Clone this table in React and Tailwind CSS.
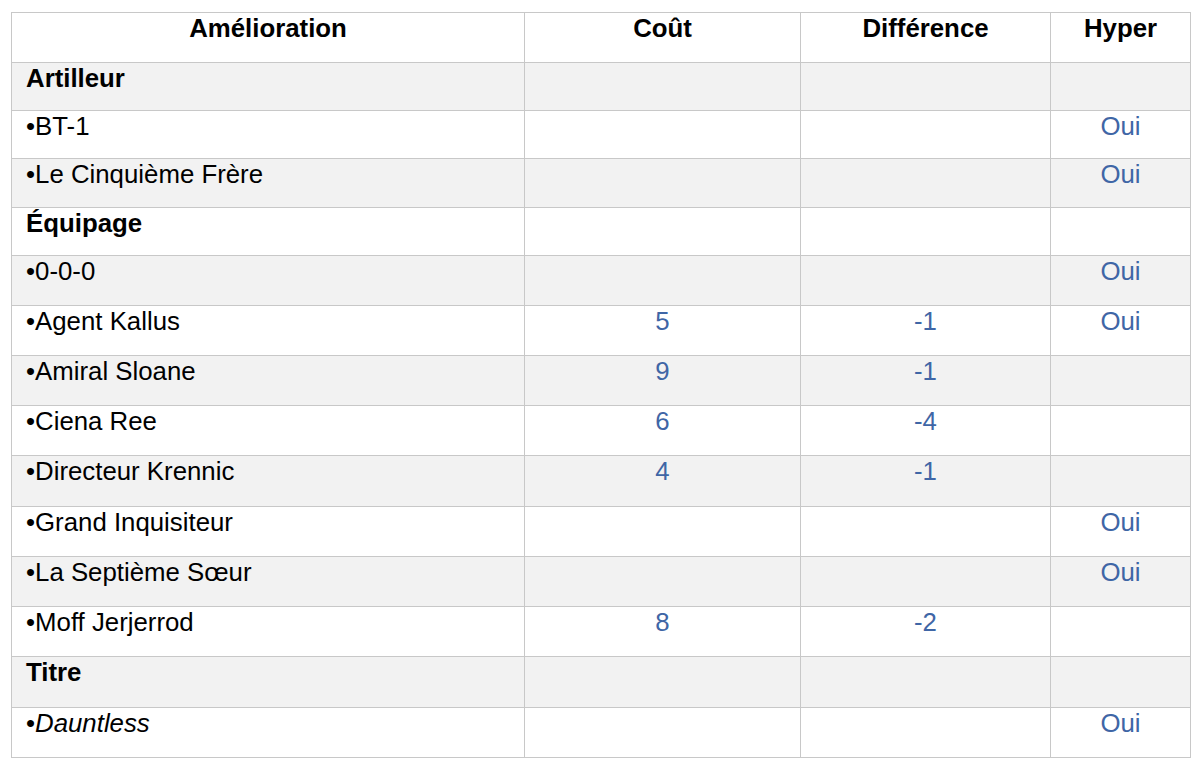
import React from "react";

const rows = [
  { name: "Artilleur", group: true, h: 48 },
  { name: "BT-1", hyper: true, h: 48 },
  { name: "Le Cinquième Frère", hyper: true, h: 49 },
  { name: "Équipage", group: true, h: 48 },
  { name: "0-0-0", hyper: true, h: 50 },
  { name: "Agent Kallus", cost: "5", diff: "-1", hyper: true, h: 50 },
  { name: "Amiral Sloane", cost: "9", diff: "-1", h: 50 },
  { name: "Ciena Ree", cost: "6", diff: "-4", h: 50 },
  { name: "Directeur Krennic", cost: "4", diff: "-1", h: 51 },
  { name: "Grand Inquisiteur", hyper: true, h: 50 },
  { name: "La Septième Sœur", hyper: true, h: 50 },
  { name: "Moff Jerjerrod", cost: "8", diff: "-2", h: 50 },
  { name: "Titre", group: true, h: 51 },
  { name: "Dauntless", italic: true, hyper: true, h: 50 },
];

const cell = "border border-[#c8c8c8] align-top pt-[1px] px-[14px] leading-[1.15]";

export default function App() {
  return (
    <div className="bg-white min-h-screen pt-[12px] pl-[11px] font-['Liberation_Sans',Arial,sans-serif] text-[25.8px] text-black">
      <table className="table-fixed border-collapse w-[1179px]">
        <colgroup>
          <col className="w-[513px]" />
          <col className="w-[276px]" />
          <col className="w-[250px]" />
          <col className="w-[140px]" />
        </colgroup>
        <thead>
          <tr className="h-[50px] bg-white">
            <th className={`${cell} text-center font-bold`}>Amélioration</th>
            <th className={`${cell} text-center font-bold`}>Coût</th>
            <th className={`${cell} text-center font-bold`}>Différence</th>
            <th className={`${cell} text-center font-bold`}>Hyper</th>
          </tr>
        </thead>
        <tbody>
          {rows.map((r, i) => (
            <tr
              key={r.name}
              className={i % 2 === 0 ? "bg-[#f2f2f2]" : "bg-white"}
              style={{ height: r.h }}
            >
              <td className={`${cell} ${r.group ? "font-bold" : ""}`}>
                {r.group ? (
                  r.name
                ) : (
                  <>
                    •{r.italic ? <i>{r.name}</i> : r.name}
                  </>
                )}
              </td>
              <td className={`${cell} text-center text-[#3f66a6]`}>{r.cost}</td>
              <td className={`${cell} text-center text-[#3f66a6]`}>{r.diff}</td>
              <td className={`${cell} text-center text-[#3f66a6]`}>{r.hyper ? "Oui" : ""}</td>
            </tr>
          ))}
        </tbody>
      </table>
    </div>
  );
}
